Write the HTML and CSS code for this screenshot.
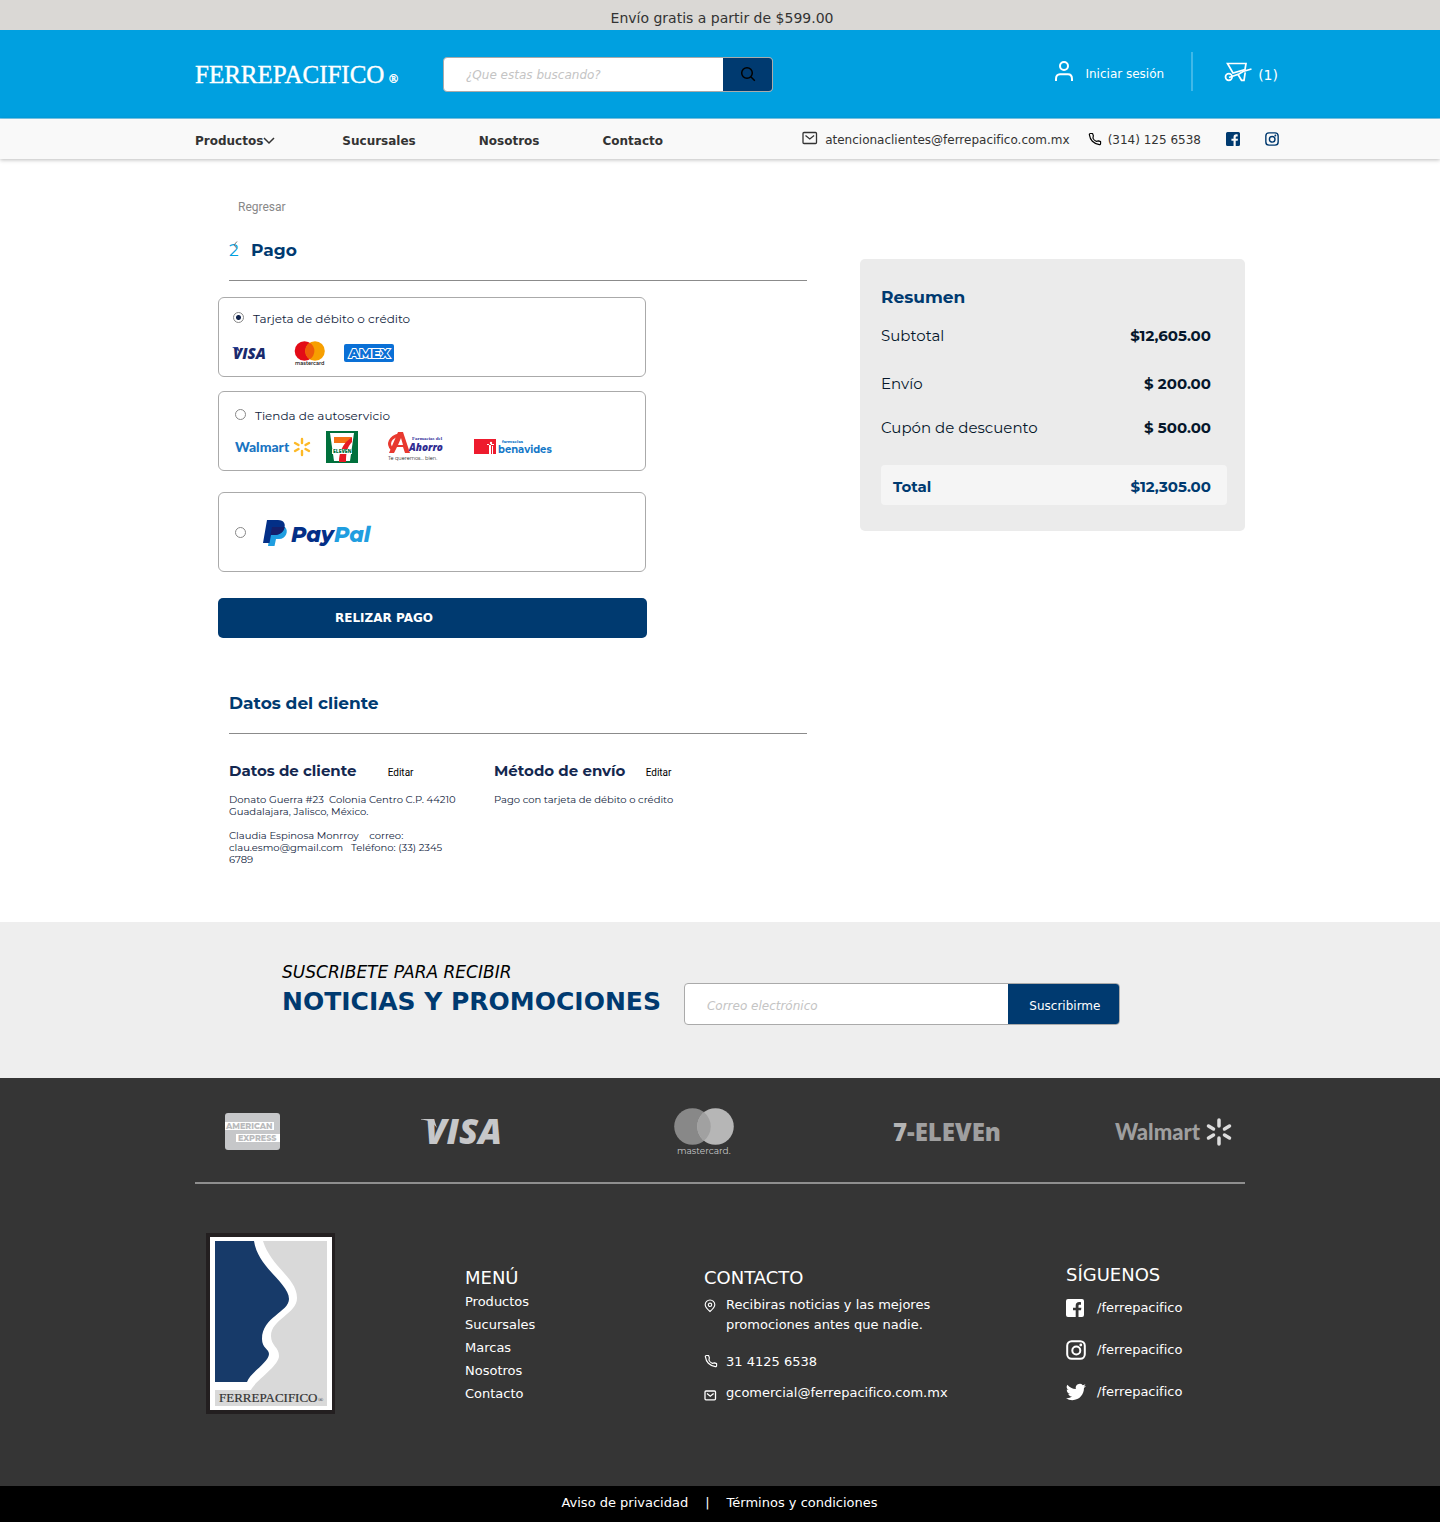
FILE: index.html
```html
<!DOCTYPE html>
<html lang="es">
<head>
<meta charset="utf-8">
<meta name="viewport" content="width=device-width, initial-scale=1">
<title>Ferrepacifico - Pago</title>
<link rel="stylesheet" href="styles.css">
</head>
<body>
<svg class="sprite" aria-hidden="true">
  <symbol id="mail" viewBox="0 0 16 14"><rect x="1" y="1.5" width="13.500" height="11" rx="1" fill="none" stroke="currentColor" stroke-width="1.3"/><path d="M3.500 4.500 7.800 8l4.300-3.500" fill="none" stroke="currentColor" stroke-width="1.300"/></symbol>
  <symbol id="phone" viewBox="0 0 24 24"><path d="M18.100 15.300 14 16c-2.800-1.400-4.500-3-5.500-5.500l.7-4.200L7.800 2.500H4.100C3 2.500 2.100 3.400 2.300 4.500 2.700 7.300 4 12.300 7.500 15.800c3.700 3.700 9 5.300 12 5.900 1.100.2 2.100-.6 2.100-1.800v-3.400z" fill="none" stroke="currentColor" stroke-width="2" stroke-linejoin="round"/></symbol>
  <symbol id="facebook" viewBox="0 0 18 18"><path fill="currentColor" d="M2 0h14a2 2 0 0 1 2 2v14a2 2 0 0 1-2 2h-3.500v-6.800H15l.4-2.400h-2.900V7c0-.8.3-1.300 1.400-1.300H15V3.200C14.700 3.100 14 3 13.200 3 11 3 9.700 4.300 9.700 6.600v2.200H7v2.400h2.700V18H2a2 2 0 0 1-2-2V2a2 2 0 0 1 2-2z"/></symbol>
  <symbol id="instagram" viewBox="0 0 20 20"><rect x="1.200" y="1.200" width="17.600" height="17.600" rx="4.500" fill="none" stroke="currentColor" stroke-width="2"/><circle cx="10.300" cy="10.500" r="4" fill="none" stroke="currentColor" stroke-width="2"/><circle cx="14.800" cy="5" r="1.400" fill="currentColor"/></symbol>
</svg>

<p class="promo">Envío gratis a partir de $599.00</p>

<header class="header">
  <a class="brand" href="#" aria-label="Ferrepacifico">
    <svg width="206" height="32" viewBox="0 0 206 32"><text x="0" y="25" font-size="25" stroke="#fff" stroke-width=".4">FERREPACIFICO</text><text x="194" y="25" font-size="12" stroke="#fff" stroke-width=".4">®</text></svg>
  </a>
  <form class="search" role="search">
    <input type="search" placeholder="¿Que estas buscando?" aria-label="Buscar">
    <button type="button" aria-label="Buscar"><svg width="16" height="16" viewBox="0 0 16 16" fill="none" stroke="#000" stroke-width="1.500"><circle cx="7" cy="7" r="5.300"/><path d="m11 11 3.800 3.800"/></svg></button>
  </form>
  <div class="account">
    <a class="login" href="#"><svg width="20" height="22" viewBox="0 0 20 22" fill="none" stroke="#fff" stroke-width="2"><circle cx="10" cy="6" r="4"/><path d="M2 21v-2c0-3 1.500-4.800 4-4.800h8c2.500 0 4 1.800 4 4.800v2"/></svg>Iniciar sesión</a>
    <a class="cart" href="#"><svg width="28" height="20" viewBox="0 0 28 20" fill="none" stroke="#fff" stroke-width="1.700"><path d="M3.500 1.500h18.500l-1 6L9 11z"/><path d="M5 15.500 15 12l4-2.500 8.500-2.500"/><circle cx="4.800" cy="15" r="3.300"/><path d="m14 12.500 3.500 5.800h2.500l1.200-8"/></svg><span>(1)</span></a>
  </div>
</header>

<div class="navbar">
  <nav class="nav" aria-label="Principal">
    <a class="has-menu" href="#">Productos<svg width="12" height="8" viewBox="0 0 12 8" fill="none" stroke="#333" stroke-width="1.500"><path d="m1 1 5 5 5-5"/></svg></a>
    <a href="#">Sucursales</a>
    <a href="#">Nosotros</a>
    <a href="#">Contacto</a>
  </nav>
  <div class="quick">
    <a class="quick-mail" href="#"><svg width="16" height="14"><use href="#mail"/></svg>atencionaclientes@ferrepacifico.com.mx</a>
    <a class="quick-phone" href="#"><svg width="14" height="14"><use href="#phone"/></svg>(314) 125 6538</a>
    <a class="quick-social" href="#" aria-label="Facebook"><svg width="14" height="14"><use href="#facebook"/></svg></a>
    <a class="quick-social" href="#" aria-label="Instagram"><svg width="14" height="14"><use href="#instagram"/></svg></a>
  </div>
</div>

<main class="main">
  <div class="checkout">
    <a class="back" href="#">Regresar</a>
    <h1 class="title"><span class="step">2<svg width="5" height="8" viewBox="0 0 5 8" fill="none" stroke="#777"><path d="M4 .5 1 4l3 3.500"/></svg></span>Pago</h1>

    <form>
      <div class="option option-card">
        <label><input type="radio" name="pago" checked>Tarjeta de débito o crédito</label>
        <div class="logos">
          <svg width="36" height="20" viewBox="0 0 36 20" role="img" aria-label="Visa"><path d="M0 4h6l2 5z" fill="#2a4196"/><text x="1" y="16" class="heavy" font-size="15" font-style="italic" fill="#1a2a6c">VISA</text></svg>
          <svg width="32" height="26" viewBox="0 0 32 26" role="img" aria-label="Mastercard"><circle cx="10.500" cy="11" r="9.800" fill="#e30b17"/><circle cx="21" cy="11" r="9.800" fill="#f79f00"/><path d="M15.800 2.700a9.800 9.800 0 0 1 0 16.600 9.800 9.800 0 0 1 0-16.600z" fill="#ee5c09"/><text x="1" y="25" font-size="5" font-weight="600" fill="#222" class="mont">mastercard</text></svg>
          <svg width="50" height="18" viewBox="0 0 50 18" role="img" aria-label="American Express"><rect width="50" height="18" rx="2" fill="#0a70d6"/><text x="5" y="14" class="mont" font-size="13" font-weight="800" fill="#0a70d6" stroke="#fff" stroke-width="2" paint-order="stroke">AMEX</text></svg>
        </div>
      </div>

      <div class="option option-store">
        <label><input type="radio" name="pago">Tienda de autoservicio</label>
        <div class="logos">
          <svg width="76" height="20" viewBox="0 0 76 20" role="img" aria-label="Walmart"><text x="0" y="15" class="walmart" font-size="14" fill="#1a75c2">Walmart</text><g stroke="#fdb927" stroke-width="2.400" stroke-linecap="round"><path d="M67 2v4M67 14v4M60 6l3.500 2M74 6l-3.500 2M60 14l3.500-2M74 14l-3.500-2"/></g></svg>
          <svg width="32" height="32" viewBox="0 0 32 32" role="img" aria-label="7-Eleven"><path fill="#00703c" d="M0 0h32v32H0z"/><path fill="#fff" d="M4 2h24l-4 28H8z"/><path fill="#f47216" d="M8 6h18l-5 6H8z"/><path fill="#e51b24" d="M20 11 26 6v5c-5 5-6 11-6 20h-7c0-9 3-15 7-20z"/><path fill="#fff" d="M6 18h20v5H6z"/><text x="7" y="22" class="heavy" font-size="5" fill="#00703c">ELEVEN</text></svg>
          <svg width="60" height="30" viewBox="0 0 60 30" role="img" aria-label="Farmacias del Ahorro"><path fill="none" stroke="#e8392f" stroke-width="3" d="M4 17c-5-5-2-12 7-14"/><path fill="#e8392f" fill-rule="evenodd" d="M10 0h5l7 21h-5l-2-6H9l-3 6H1zM13 6l-3 7h5z"/><text x="24" y="8" class="serif" font-size="5" font-weight="700" fill="#33309b">Farmacias del</text><text x="21" y="19" class="heavy" font-size="10" font-style="italic" fill="#302c92">Ahorro</text><text x="0" y="28" class="mont" font-size="5" fill="#222">Te queremos... bien.</text></svg>
          <svg width="82" height="17" viewBox="0 0 82 17" role="img" aria-label="Farmacias Benavides"><path fill="#ee1b2e" d="M0 0h22v15H0z"/><path fill="#fff" d="M15 5v10h2V5zM13 5h7v1h-7zM18 7v8h1V7z"/><circle cx="17" cy="4" r="1.200" fill="#fff"/><text x="28" y="4" class="mont" font-size="4" font-weight="800" fill="#1478c8">farmacias</text><text x="24" y="14" class="mont" font-size="10" font-weight="700" fill="#1478c8">benavides</text></svg>
        </div>
      </div>

      <div class="option option-paypal">
        <label><input type="radio" name="pago" aria-label="PayPal">
          <svg width="112" height="28" viewBox="0 0 112 28" role="img" aria-label="PayPal"><path fill="#1f9ee0" d="M8 9h14c4 4 1 12-6 12h-3l-1.500 7H5z"/><path fill="#032f87" d="M4 2h11c6 0 8 4 6 9-2 4-5 6-10 6H8l-1.500 8H0z"/><path fill="#15206c" d="M9 9h12.500c0 4-4 8-10.500 8H7.500z"/><text x="28" y="24" class="mont" font-size="21" font-weight="800" font-style="italic" fill="#032f87">Pay<tspan fill="#1f9ee0">Pal</tspan></text></svg>
        </label>
      </div>

      <button class="pay" type="button">RELIZAR PAGO</button>
    </form>

    <h2 class="title title-client">Datos del cliente</h2>
    <div class="details">
      <section>
        <h3>Datos de cliente <a class="edit-far" href="#">Editar</a></h3>
        <p>Donato Guerra #23&nbsp; Colonia Centro C.P. 44210<br>Guadalajara, Jalisco, México.</p>
        <p>Claudia Espinosa Monrroy &nbsp;&nbsp; correo:<br>clau.esmo@gmail.com &nbsp; Teléfono: (33) 2345<br>6789</p>
      </section>
      <section>
        <h3>Método de envío <a href="#">Editar</a></h3>
        <p>Pago con tarjeta de débito o crédito</p>
      </section>
    </div>
  </div>

  <aside class="summary">
    <h2>Resumen</h2>
    <dl>
      <div><dt>Subtotal</dt><dd>$12,605.00</dd></div>
      <div><dt>Envío</dt><dd>$ 200.00</dd></div>
      <div class="discount"><dt>Cupón de descuento</dt><dd>$ 500.00</dd></div>
      <div class="total"><dt>Total</dt><dd>$12,305.00</dd></div>
    </dl>
  </aside>
</main>

<section class="newsletter">
  <h2><span>SUSCRIBETE PARA RECIBIR</span>NOTICIAS Y PROMOCIONES</h2>
  <form class="subscribe">
    <input type="email" placeholder="Correo electrónico" aria-label="Correo electrónico">
    <button type="button">Suscribirme</button>
  </form>
</section>

<footer class="footer">
  <div class="footer-inner">
    <div class="partners">
      <svg width="56" height="38" viewBox="0 0 56 38" role="img" aria-label="American Express"><rect width="55" height="37" rx="3" fill="#c6c7c9"/><path fill="#fff" d="M0 9h49v8H0zM11 21h44v8H11z"/><g class="mont" font-size="8" font-weight="800" fill="#b9babc"><text x="1" y="16">AMERICAN</text><text x="13" y="28">EXPRESS</text></g></svg>
      <svg width="88" height="48" viewBox="0 0 88 48" role="img" aria-label="Visa"><path fill="#c6c7c9" d="M0 11h13l3 9C12 14 6 12 0 11.500z"/><text x="4" y="36" class="heavy" font-size="35" font-style="italic" fill="#c6c7c9">VISA</text></svg>
      <svg width="64" height="48" viewBox="0 0 64 48" role="img" aria-label="Mastercard"><circle cx="18.500" cy="18.500" r="18.300" fill="#888"/><circle cx="41.500" cy="18.500" r="18.300" fill="#b6b6b6"/><path d="M30 4.300a18.300 18.300 0 0 1 0 28.400 18.300 18.300 0 0 1 0-28.400z" fill="#a1a1a1"/><text x="3" y="46" class="mont" font-size="9" fill="#c6c7c9">mastercard.</text></svg>
      <svg width="116" height="36" viewBox="0 0 116 36" role="img" aria-label="7-Eleven"><text x="0" y="27" class="heavy" font-size="24" fill="#9f9f9f"><tspan fill="#b4b4b4">7</tspan>-ELEVEn</text></svg>
      <svg width="120" height="32" viewBox="0 0 120 32" role="img" aria-label="Walmart"><text x="0" y="24" class="walmart" font-size="22" fill="#9f9f9f">Walmart</text><g stroke="#ddd" stroke-width="3.500" stroke-linecap="round"><path d="M104 4v6M104 22v6M93.500 10l5 3M114.500 10l-5 3M93.500 22l5-3M114.500 22l-5-3"/></g></svg>
    </div>

    <div class="footer-cols">
      <svg class="emblem" width="129" height="182" viewBox="0 0 129 182" role="img" aria-label="Ferrepacifico"><path fill="#231f20" d="M0 1h129v181H0z"/><path fill="#fff" d="M4 5h122v173H4z"/><path fill="#d9d9d9" d="M57 9h64v165H9v-16h36c4-9 28-24 28-34 0-9-8-10-8-20 0-17 26-22 26-38C91 46 65 35 57 9z"/><path fill="#173a69" d="M9 9h39c4 27 35 42 35 58 0 13-27 18-27 40 0 9 7 10 7 15 0 8-19 19-22 28H9z"/><text x="13" y="170" font-size="13" class="serif" fill="#333" stroke="#333" stroke-width=".2">FERREPACIFICO</text><text x="112" y="170" font-size="7" class="serif" fill="#333">®</text></svg>
      <nav class="menu" aria-label="Menú">
        <h2>MENÚ</h2>
        <ul><li><a href="#">Productos</a></li><li><a href="#">Sucursales</a></li><li><a href="#">Marcas</a></li><li><a href="#">Nosotros</a></li><li><a href="#">Contacto</a></li></ul>
      </nav>
      <section class="contact">
        <h2>CONTACTO</h2>
        <p class="contact-place"><svg width="12" height="14" viewBox="0 0 12 14" fill="none" stroke="#fff" stroke-width="1.100"><path d="M6 12.500C3 10 1.200 8 1.200 5.800a4.800 4.800 0 0 1 9.600 0C10.800 8 9 10 6 12.500z"/><circle cx="6" cy="5.800" r="1.700"/></svg>Recibiras noticias y las mejores<br>promociones antes que nadie.</p>
        <a class="contact-phone" href="#"><svg width="14" height="14"><use href="#phone"/></svg>31 4125 6538</a>
        <a class="contact-mail" href="#"><svg width="13" height="11" viewBox="0 0 13 11" fill="none" stroke="#fff" stroke-width="1.300"><rect x="1" y="1" width="10.500" height="8.800" rx="1"/><path d="m3 3.500 3.300 2.700 3.300-2.700"/></svg>gcomercial@ferrepacifico.com.mx</a>
      </section>
      <section class="follow">
        <h2>SÍGUENOS</h2>
        <a href="#"><svg width="18" height="18"><use href="#facebook"/></svg>/ferrepacifico</a>
        <a href="#"><svg width="20" height="20"><use href="#instagram"/></svg>/ferrepacifico</a>
        <a href="#"><svg width="20" height="20" viewBox="0 0 24 24"><path fill="#fff" d="M23.950 4.570a10 10 0 0 1-2.820.77 4.960 4.960 0 0 0 2.160-2.720c-.95.550-2 .95-3.120 1.180a4.920 4.920 0 0 0-8.390 4.480C7.690 8.100 4.070 6.130 1.640 3.160a4.920 4.920 0 0 0 1.520 6.570 4.900 4.900 0 0 1-2.220-.62v.06a4.920 4.920 0 0 0 3.950 4.830 5 5 0 0 1-2.220.08 4.930 4.930 0 0 0 4.600 3.420A9.870 9.870 0 0 1 0 19.540a14 14 0 0 0 7.550 2.210c9.050 0 14-7.500 14-13.980l-.02-.64a9.900 9.900 0 0 0 2.420-2.560z"/></svg>/ferrepacifico</a>
      </section>
    </div>
  </div>
  <div class="legal"><a href="#">Aviso de privacidad</a><span>|</span><a href="#">Términos y condiciones</a></div>
</footer>
</body>
</html>
```
FILE: styles.css
```css
:root {
  --navy: #003a70;
  --blue: #00a0e0;
  --ink: #10233c;
  --brand-font: Montserrat, Inter, "Open Sans", sans-serif;
}

* { box-sizing: border-box; }
body { margin: 0; background: #fff; color: #333; font: 12px/20px "DejaVu Sans", sans-serif; }
h1, h2, h3, p, dl, dd, ul { margin: 0; padding: 0; }
ul { list-style: none; }
a { color: inherit; text-decoration: none; }
button, input { font: inherit; margin: 0; }
button { border: 0; cursor: pointer; }
svg { flex: none; display: block; overflow: visible; }
.sprite { position: absolute; width: 0; height: 0; overflow: hidden; }
.heavy { font-family: "Open Sans", sans-serif; font-weight: 800; }
.mont { font-family: var(--brand-font); }
.serif { font-family: "Liberation Serif", serif; }
.walmart { font-family: Lato, sans-serif; font-weight: 900; }

/* Header */
.promo { background: #dad8d5; padding: 8px 0 2px 4px; text-align: center; font-size: 14px; }
.header { display: flex; align-items: center; min-height: 89px; padding: 0 162px 0 195px; background: var(--blue); border-bottom: 1px solid #7ccbed; color: #fff; }
.brand { margin-right: 42px; }
.brand svg { fill: #fff; font-family: "Liberation Serif", serif; }
.search, .subscribe { display: flex; border: 1px solid #aaa; border-radius: 4px; overflow: hidden; background: #fff; }
.search { width: 330px; height: 35px; }
.search input, .subscribe input { flex: 1; min-width: 0; border: 0; outline: 0; padding: 0 22px; background: none; }
.search input { padding-top: 2px; }
::placeholder { color: #c4c4c4; font-style: italic; opacity: 1; }
.search button { width: 49px; padding: 0; display: grid; place-items: center; background: var(--navy); }
.account { display: flex; align-items: center; margin-left: auto; }
.login { display: flex; align-items: center; gap: 11px; padding: 6px 27px 0 0; border-right: 2px solid #40b8e8; line-height: 33px; margin-bottom: 6px; }
.login svg { margin-bottom: 6px; }
.cart { display: flex; align-items: center; gap: 6px; margin-left: 31px; font-size: 14px; }
.cart span { padding-top: 2px; }
.cart svg { margin-bottom: 5px; }

.navbar { display: flex; justify-content: space-between; align-items: center; min-height: 40px; padding: 0 161px 0 195px; background: #f9f9f9; box-shadow: 0 1px 4px #0004; }
.nav { display: flex; gap: 63px; padding-top: 4px; font-weight: 700; }
.has-menu { display: flex; align-items: center; padding-right: 4px; }
.quick { display: flex; align-items: center; padding-top: 1px; }
.quick a { display: flex; align-items: center; }
.quick svg { margin-bottom: 2px; }
.quick-mail { gap: 7px; margin-right: 18px; }
.quick-mail svg { margin-bottom: 4px; }
.quick-phone { gap: 6px; }
.quick-phone svg { color: #000; }
.quick-social { margin-left: 25px; color: var(--navy); }

/* Checkout */
.main { display: grid; grid-template-columns: minmax(0, 589px) minmax(0, 385px); gap: 53px; align-items: start; max-width: 1050px; margin: 0 auto; padding: 40px 0 56px 23px; color: var(--ink); font-family: var(--brand-font); }
.back { display: block; margin-left: 20px; color: #888; font: 12px/16px Roboto, sans-serif; }
.title { display: flex; margin: 23px 0 16px 11px; padding-bottom: 18px; border-bottom: 1px solid #8b8b8b; color: var(--navy); font-size: 17px; line-height: 24px; }
.step { position: relative; width: 22px; color: var(--blue); font-weight: 400; }
.step svg { position: absolute; left: 4px; top: 3px; }
.option { max-width: 428px; min-height: 80px; border: 1px solid #aaa; border-radius: 6px; font-size: 12px; line-height: 20px; }
.option label, .logos { display: flex; align-items: center; }
.option input { appearance: none; flex: none; width: 11px; height: 11px; border: 1px solid #888; border-radius: 50%; background: #fff; }
.option input:checked { background: radial-gradient(circle, #10234c 2px, #fff 3px); }
.option label { gap: 9px; }
.option-card { padding: 11px 14px 10px; }
.option-card input, .option-store input { margin-bottom: 4px; }
.option-card .logos { margin: 11px 0 0 -1px; }
.option-card .logos svg + svg { margin-left: 26px; }
.option-card .logos svg:last-child { margin-left: 18px; }
.option-store { margin-top: 14px; padding: 14px 16px 4px; }
.option-store .logos { margin-top: 5px; }
.option-store .logos svg:nth-child(2) { margin-left: 15px; }
.option-store .logos svg:nth-child(3) { margin-left: 30px; }
.option-store .logos svg:nth-child(4) { margin-left: 26px; }
.option-paypal { display: flex; align-items: center; margin-top: 21px; padding: 0 16px; }
.option-paypal label { gap: 17px; }
.pay { display: block; width: 100%; max-width: 429px; height: 40px; margin-top: 26px; padding: 0 200px 0 117px; border-radius: 5px; background: var(--navy); color: #fff; font: 700 12px/40px "DejaVu Sans", sans-serif; white-space: nowrap; text-align: left; }
.title-client { margin-top: 53px; margin-bottom: 25px; }
.details { display: grid; grid-template-columns: 265px 1fr; margin-left: 11px; }
.details h3 { margin-bottom: 11px; font-size: 15px; line-height: 24px; color: #142850; }
.details h3 a { margin-left: 16px; color: #000; font: 10px/16px Roboto, sans-serif; }
.details h3 .edit-far { margin-left: 27px; }
.details p { font-size: 10px; line-height: 12px; }
.details p + p { margin-top: 12px; }

.summary { margin-top: 60px; padding: 26px 18px 26px 21px; border-radius: 5px; background: #ebebeb; color: #06172b; font-size: 15px; line-height: 24px; }
.summary h2 { margin-bottom: 15px; color: var(--navy); font-size: 17px; }
.summary dl div { display: flex; justify-content: space-between; margin-bottom: 24px; padding-right: 16px; }
.summary dl div:nth-child(2) { margin-bottom: 20px; }
.summary dd { font-weight: 700; }
.summary dl .total { margin: 25px 0 0; padding: 10px 16px 6px 12px; border-radius: 4px; background: #f5f5f5; color: var(--navy); font-weight: 700; }
.summary dl .discount { margin-bottom: 0; }

/* Newsletter */
.newsletter { display: flex; gap: 23px; min-height: 156px; padding: 39px 120px 52px 282px; background: #eee; }
.newsletter h2 { color: var(--navy); font-size: 25px; line-height: 38px; white-space: nowrap; }
.newsletter h2 span { display: block; color: #000; font-size: 17px; line-height: 22px; font-weight: 400; font-style: italic; }
.subscribe { width: 436px; height: 42px; margin-top: 22px; }
.subscribe input { padding-top: 3px; }
.subscribe button { width: 111px; padding: 3px 0 0 3px; background: var(--navy); color: #fff; }

/* Footer */
.footer { background: #353535; color: #fff; font-size: 13px; }
.footer-inner { max-width: 1050px; margin: 0 auto; }
.partners { display: grid; grid-template-columns: 196fr 253fr 219fr 222fr 130fr; align-items: center; min-height: 106px; padding: 4px 0 0 30px; border-bottom: 2px solid #8f8f8f; }
.footer-cols { display: grid; grid-template-columns: 259px 239px 362px 1fr; align-items: start; padding: 48px 0 72px 11px; }
.footer-cols h2 { font-size: 18px; line-height: 24px; font-weight: 400; }
.menu, .contact { margin-top: 34px; }
.menu a { display: block; line-height: 23px; }
.contact p, .contact a { display: block; position: relative; padding-left: 22px; line-height: 20px; }
.contact svg { position: absolute; left: 0; top: 4px; }
.contact .contact-phone svg { top: 2px; }
.contact .contact-mail svg { top: 7px; }
.contact .contact-place { margin: 5px 0 17px; }
.contact .contact-phone { margin-bottom: 11px; }
.follow { margin-top: 31px; }
.follow h2 { margin-bottom: 11px; }
.follow a { display: grid; grid-template-columns: 31px 1fr; align-items: center; margin-bottom: 22px; }
.follow a:last-child { margin-bottom: 0; }
.legal { display: flex; justify-content: center; gap: 17px; padding: 7px 1px 9px 0; background: #000; }
```
